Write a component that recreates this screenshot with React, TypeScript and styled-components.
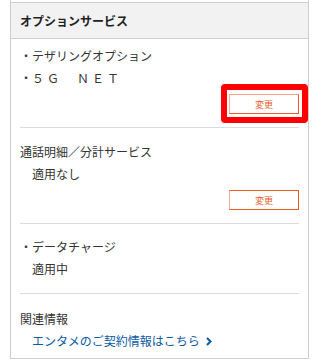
import React from 'react';
import styled, { createGlobalStyle } from 'styled-components';

const GlobalStyle = createGlobalStyle`
  body {
    margin: 0;
    background: #fff;
    font-family: "Noto Sans CJK JP", "Noto Sans", sans-serif;
    color: #333;
  }
`;

const Card = styled.div`
  width: 297px;
  margin-left: 10px;
  padding-top: 2px;
  border: 1px solid #cfcfcf;
  border-top: none;
`;

const Header = styled.div`
  height: 35px;
  display: flex;
  align-items: center;
  padding-left: 9px;
  background: #f2f2f2;
  border-top: 1px solid #cfcfcf;
  border-bottom: 1px solid #cfcfcf;
  font-size: 12px;
  font-weight: 700;
  color: #222;
`;

const Body = styled.div`
  padding: 0 9px 0 9px;
`;

const Section = styled.div<{ $top: number; $bottom: number; $last?: boolean }>`
  padding: ${({ $top }) => $top}px 0 ${({ $bottom }) => $bottom}px;
  border-bottom: ${({ $last }) => ($last ? 'none' : '1px solid #dcdcdc')};
  display: flex;
  flex-direction: column;
`;

const Line = styled.div<{ $indent?: boolean }>`
  height: 22px;
  display: flex;
  align-items: center;
  font-size: 12px;
  line-height: 1;
  padding-left: ${({ $indent }) => ($indent ? '12px' : '0')};
  white-space: nowrap;
`;

const Spaced = styled.span`
  letter-spacing: 3px;
`;

const ButtonRow = styled.div`
  display: flex;
  justify-content: flex-end;
  margin-top: 5px;
`;

const ButtonWrap = styled.div`
  position: relative;
  display: flex;
`;

const ChangeButton = styled.button<{ $soft?: boolean }>`
  display: block;
  width: 70px;
  height: 20px;
  padding: 0;
  background: #fff;
  border: 1px solid #ee5a22;
  border-left-color: #f8ae90;
  border-top-color: ${({ $soft }) => ($soft ? '#f6a27f' : '#ee5a22')};
  color: #e9602a;
  font-family: inherit;
  font-size: 9px;
  line-height: 1;
  cursor: pointer;
`;

const Highlight = styled.div`
  position: absolute;
  left: -8px;
  right: -9px;
  top: -10px;
  bottom: -9px;
  border: 6px solid #ff0000;
  border-radius: 4px;
  pointer-events: none;
`;

const Link = styled.a`
  height: 22px;
  display: flex;
  align-items: center;
  gap: 6px;
  font-size: 12px;
  line-height: 1;
  padding-left: 12px;
  color: #0d5aa3;
  text-decoration: none;
  white-space: nowrap;
`;

const Chevron = () => (
  <svg width="6" height="9" viewBox="0 0 6 9">
    <path d="M1 1 L4.5 4.5 L1 8" fill="none" stroke="#0d5aa3" strokeWidth="2" />
  </svg>
);

export default function App() {
  return (
    <>
      <GlobalStyle />
      <Card>
        <Header>オプションサービス</Header>
        <Body>
          <Section $top={6} $bottom={13}>
            <Line>・テザリングオプション</Line>
            <Line>
              ・<Spaced>５Ｇ　ＮＥＴ</Spaced>
            </Line>
            <ButtonRow>
              <ButtonWrap>
                <ChangeButton $soft>変更</ChangeButton>
                <Highlight />
              </ButtonWrap>
            </ButtonRow>
          </Section>
          <Section $top={13} $bottom={13}>
            <Line>通話明細／分計サービス</Line>
            <Line $indent>適用なし</Line>
            <ButtonRow>
              <ChangeButton>変更</ChangeButton>
            </ButtonRow>
          </Section>
          <Section $top={12} $bottom={13}>
            <Line>・データチャージ</Line>
            <Line $indent>適用中</Line>
          </Section>
          <Section $top={14} $bottom={6} $last>
            <Line>関連情報</Line>
            <Link href="#">
              エンタメのご契約情報はこちら
              <Chevron />
            </Link>
          </Section>
        </Body>
      </Card>
    </>
  );
}
